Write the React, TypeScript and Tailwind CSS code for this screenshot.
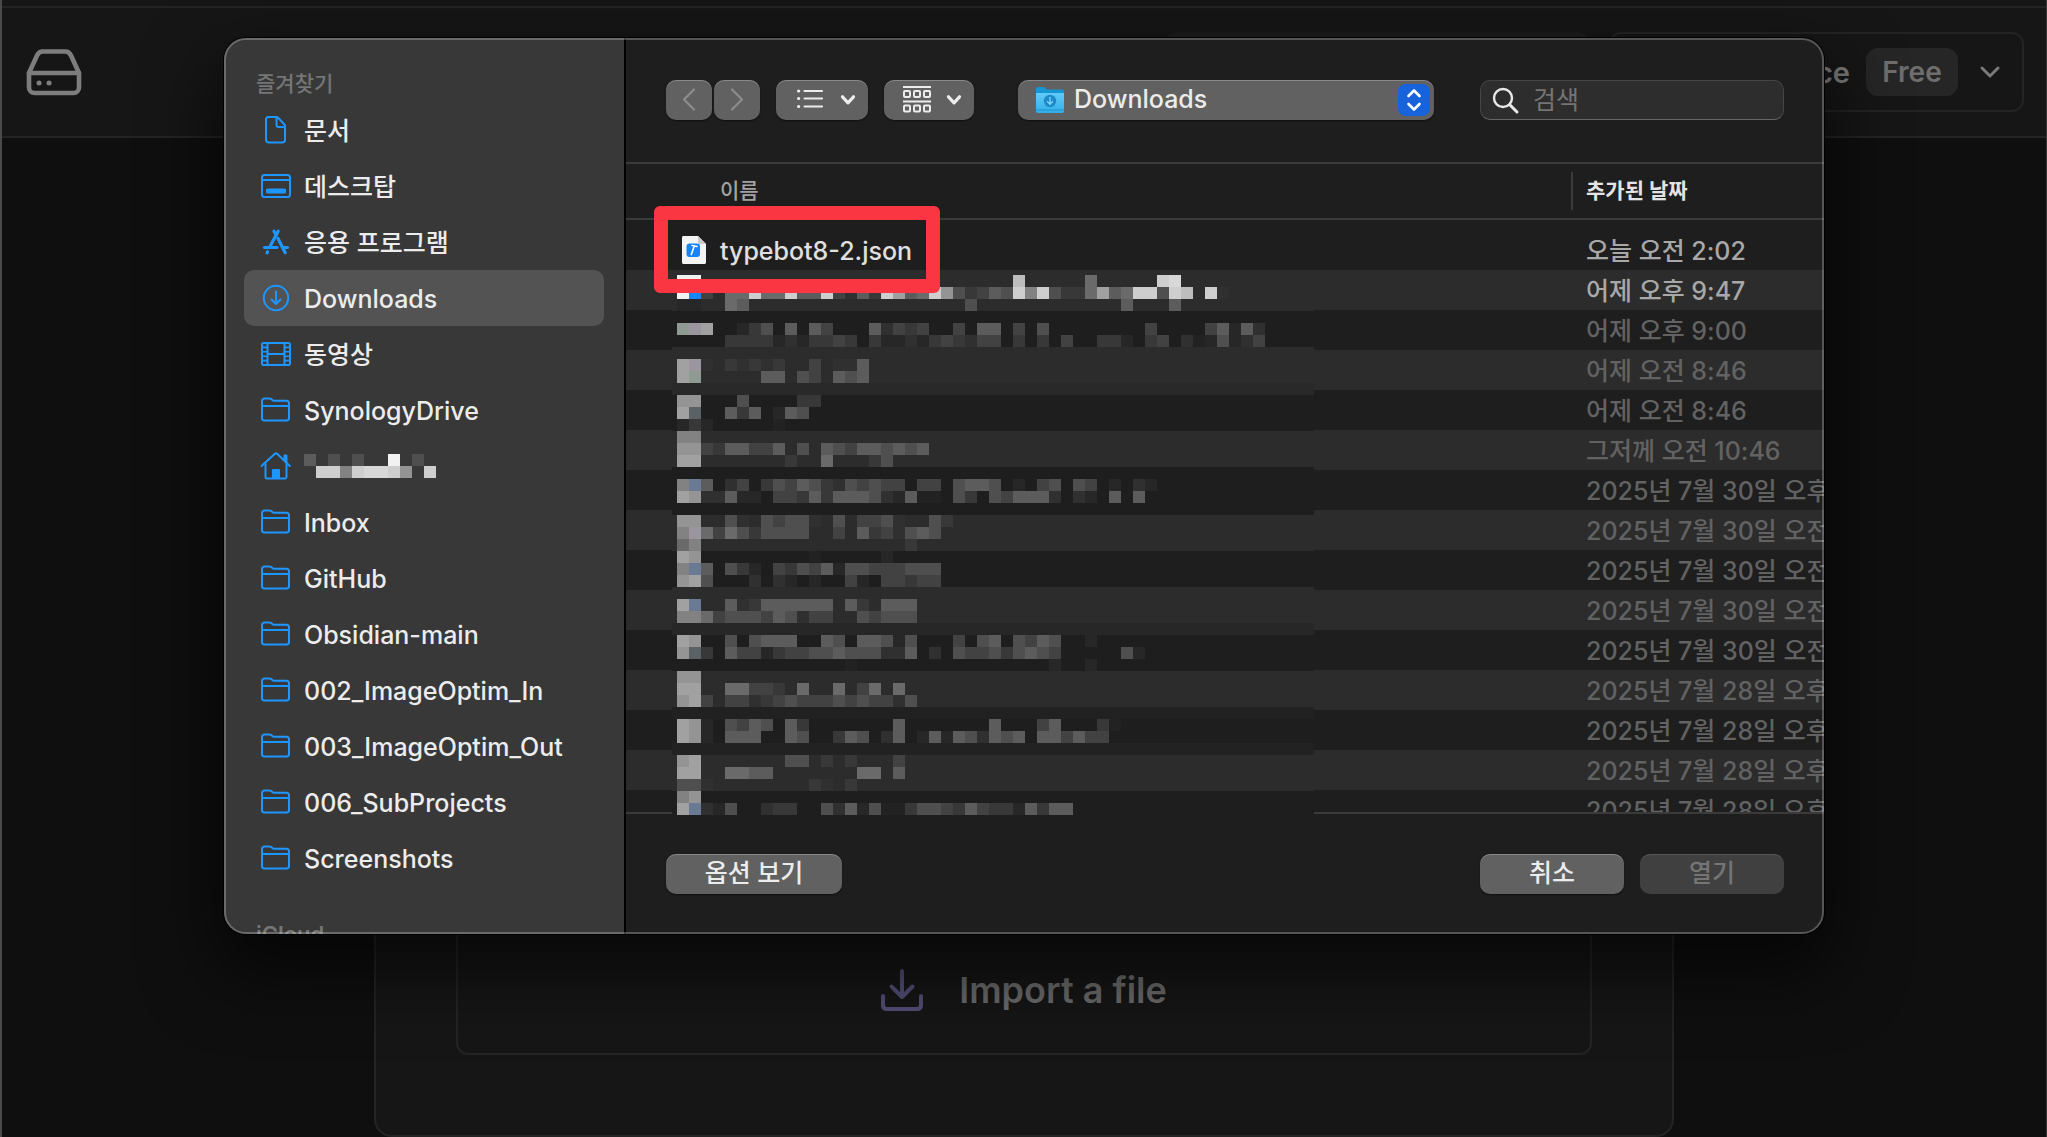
import React from "react";

const FONT = "font-[Inter,'Noto_Sans_CJK_KR',sans-serif]";

type IconName = "doc" | "desktop" | "apps" | "download" | "film" | "folder" | "home";

function SidebarIcon({ name }: { name: IconName }) {
  return (
    <svg
      aria-hidden="true"
      viewBox="0 0 32 32"
      className="h-8 w-8 shrink-0"
      fill="none"
      stroke="#1e96ff"
      strokeWidth="2"
      strokeLinejoin="round"
      strokeLinecap="round"
    >
      {name === "doc" && (
        <>
          <path d="M8.5 3h7.700c.8 0 1.300.2 1.900.8l6.100 6.400c.6.6.8 1.100.8 1.900V26a2.500 2.500 0 0 1-2.500 2.500H8.500A2.500 2.500 0 0 1 6 26V5.500A2.500 2.500 0 0 1 8.500 3Z" />
          <path d="M16.500 3.500v7.500c0 1.200.8 2 2 2h6" />
        </>
      )}
      {name === "desktop" && (
        <>
          <rect x="2" y="5" width="28" height="22" rx="2.500" />
          <path d="M2.500 10h27" />
          <rect x="7" y="19.500" width="18" height="3" rx="0.500" fill="#1e96ff" />
        </>
      )}
      {name === "apps" && (
        <g strokeWidth="3.200">
          <path d="M14 5.200 16.200 9" />
          <path d="M18.200 5.200 10.500 19.500" />
          <path d="M4.500 21.500h12.500" />
          <path d="M24.500 21.500h3" />
          <path d="M7.600 25.800 7 26.900" />
          <path d="M18 12.500l7.200 14.200" />
        </g>
      )}
      {name === "download" && (
        <>
          <circle cx="16" cy="16" r="12.200" />
          <path d="M16 9.500v12.500M11.500 17.500 16 22l4.500-4.500" />
        </>
      )}
      {name === "film" && (
        <>
          <rect x="2" y="5" width="28" height="22" rx="1.500" />
          <path d="M7.500 5v22M24.500 5v22M7.500 16h17" />
          <path
            strokeWidth="1.600"
            d="M2 9.400h5.500M2 13.800h5.500M2 18.200h5.500M2 22.600h5.500M24.500 9.400H30M24.500 13.800H30M24.500 18.200H30M24.500 22.600H30"
          />
        </>
      )}
      {name === "folder" && (
        <>
          <path d="M2 8V7a2.500 2.500 0 0 1 2.500-2.500h4.800c.9 0 1.500.2 2.200.8l.8.7c.6.5 1.100.7 2 .7h12.200A2.500 2.500 0 0 1 29 9.200V24a2.500 2.500 0 0 1-2.500 2.500h-22A2.500 2.500 0 0 1 2 24Z" />
          <path d="M2 12h27" />
        </>
      )}
      {name === "home" && (
        <>
          <path d="M1.500 16 14.600 4c.9-.8 1.900-.8 2.800 0L29.800 16" />
          <path d="M5.500 14v13a1.500 1.500 0 0 0 1.500 1.500h18a1.500 1.500 0 0 0 1.500-1.500V14" />
          <path d="M24.500 10.500V5.500h2v7" />
          <path d="M13 28v-8h6v8Z" fill="#1e96ff" />
        </>
      )}
    </svg>
  );
}

/* Cells of a redacted area: "column:levels" runs, one level letter per cell. */
const LEVELS: Record<string, string> = {
  "0": "#222222",
  "1": "#272727",
  "2": "#303030",
  "3": "#383838",
  "4": "#424242",
  "5": "#4f4f4f",
  "6": "#5c5c5c",
  "7": "#6a6a6a",
  "8": "#828282",
  "9": "#949494",
  A: "#a1a1a1",
  B: "#bdbdbd",
  C: "#cecece",
  D: "#d8d8d8",
  W: "#f2f2f2",
  S: "#1a84fb",
  s: "#6a7a95",
  g: "#8f9a92",
  p: "#9a959f",
  k: "#5a6266",
};

function Mosaic({ rows }: { rows: string[] }) {
  return (
    <>
      {rows.flatMap((row, y) =>
        row
          .split(" ")
          .filter(Boolean)
          .flatMap((run) => {
            const [start, cells] = run.split(":");
            return cells
              .split("")
              .map((c, i) => (
                <rect
                  key={`${y}-${start}-${i}`}
                  x={(Number(start) + i) * 12}
                  y={y * 12}
                  width="12"
                  height="12"
                  fill={LEVELS[c]}
                />
              ));
          }),
      )}
    </>
  );
}

const USER_CELLS = ["0:6 2:5 4:5 7:W 9:5", "1:CC8CDDC9 10:C"];

const LIST_CELLS = [
  "0:WW 28:B 34:7 40:CD",
  "0:WS4 4:77C77C66C42 15:63CA67C9534 26:65C8C5337A67CC5CB 44:C2",
  "0:11 4:76 24:5 37:6 41:6",
  "",
  "0:gpA 5:135 9:6 11:64 16:62434 23:4 25:66 28:4 30:5 39:4 44:46162",
  "4:333312133 13:43 16:311213432 25:44 28:3 30:3 32:4 35:331 39:34 42:2015124",
  "",
  "0:Ap2 4:32323 11:4 13:226",
  "0:Ag 7:66 10:54 13:656",
  "",
  "0:99 5:5 10:33",
  "0:Ak 4:636 8:165",
  "0:131 8:0",
  "0:88",
  "0:99436644 8:6 10:5 12:654665656",
  "0:AA 9:3 12:7 16:35",
  "",
  "0:8s6 4:24 7:354653254544 20:44 23:5665 28:1 30:45 33:54 36:1 38:21",
  "0:A922611 8:44363666 16:521600 23:53 26:546662 33:21 36:6 38:6",
  "",
  "0:99 4:52 7:545 10:52 13:5 15:4452 21:53",
  "0:8p7475355 9:55 13:4 15:6342565",
  "0:78 19:3",
  "0:A9 11:0 17:1",
  "0:8s6 4:531 8:43546155444555",
  "0:9A5 6:2 8:21 11:1 14:41 17:44344",
  "",
  "0:As 4:62366666 12:6 14:63 17:666",
  "0:887455546524 12:4 15:54555",
  "",
  "0:A9 4:5 6:5666 12:65 15:66515 23:4 25:56 28:5465 34:1",
  "0:9k3 4:64413445565552 18:26 21:2 23:54453565 31:4 37:51",
  "14:0 31:1 34:1",
  "0:99",
  "0:AA 4:77443 10:7 13:7 15:47 18:7",
  "0:9A4 4:4423454445454425",
  "",
  "0:A91 4:5465 9:63 18:6 26:6 30:46 35:30",
  "0:A91 4:666 9:65 13:365 17:26 20:16165 25:2656 30:664644",
  "",
  "0:9A 9:55 12:3 14:3 18:4",
  "0:AA 4:7766 15:77 18:6",
  "0:552 11:32 14:3",
  "0:89",
  "0:As215 7:233 12:526 15:15003554364331636 32:6",
];

/* Background bands behind the redacted names: [top, height, colour]. */
const BANDS: [number, number, string][] = [
  [0, 36, "#2c2c2c"],
  [36, 36, "#1e1e1e"],
  [72, 36, "#2c2c2c"],
  [108, 12, "#292929"],
  [120, 36, "#1e1e1e"],
  [156, 36, "#2c2c2c"],
  [192, 48, "#1e1e1e"],
  [240, 36, "#2c2c2c"],
  [276, 36, "#1e1e1e"],
  [312, 36, "#2c2c2c"],
  [348, 12, "#272727"],
  [360, 36, "#1e1e1e"],
  [396, 36, "#2c2c2c"],
  [432, 12, "#212121"],
  [444, 24, "#1e1e1e"],
  [468, 12, "#222222"],
  [480, 36, "#2c2c2c"],
  [516, 24, "#1e1e1e"],
];

const PLACES: { icon: IconName; label: string }[] = [
  { icon: "doc", label: "문서" },
  { icon: "desktop", label: "데스크탑" },
  { icon: "apps", label: "응용 프로그램" },
  { icon: "download", label: "Downloads" },
  { icon: "film", label: "동영상" },
  { icon: "folder", label: "SynologyDrive" },
  { icon: "home", label: "" },
  { icon: "folder", label: "Inbox" },
  { icon: "folder", label: "GitHub" },
  { icon: "folder", label: "Obsidian-main" },
  { icon: "folder", label: "002_ImageOptim_In" },
  { icon: "folder", label: "003_ImageOptim_Out" },
  { icon: "folder", label: "006_SubProjects" },
  { icon: "folder", label: "Screenshots" },
];

const FILES: { name: string; added: string; enabled: boolean }[] = [
  { name: "typebot8-2.json", added: "오늘 오전 2:02", enabled: true },
  { name: "", added: "어제 오후 9:47", enabled: true },
  { name: "", added: "어제 오후 9:00", enabled: false },
  { name: "", added: "어제 오전 8:46", enabled: false },
  { name: "", added: "어제 오전 8:46", enabled: false },
  { name: "", added: "그저께 오전 10:46", enabled: false },
  { name: "", added: "2025년 7월 30일 오후", enabled: false },
  { name: "", added: "2025년 7월 30일 오전", enabled: false },
  { name: "", added: "2025년 7월 30일 오전", enabled: false },
  { name: "", added: "2025년 7월 30일 오전", enabled: false },
  { name: "", added: "2025년 7월 30일 오전", enabled: false },
  { name: "", added: "2025년 7월 28일 오후", enabled: false },
  { name: "", added: "2025년 7월 28일 오후", enabled: false },
  { name: "", added: "2025년 7월 28일 오후", enabled: false },
  { name: "", added: "2025년 7월 28일 오후", enabled: false },
];

function Sidebar() {
  return (
    <nav aria-label="즐겨찾기" className="w-[402px] shrink-0 border-r-2 border-black bg-[#383838] pt-[26px]">
      <h2 className="px-8 pt-[2px] text-[21px] leading-9 font-medium text-[#757575]">즐겨찾기</h2>
      <ul>
        {PLACES.map((place, i) => (
          <li key={i} className="px-5">
            <button
              type="button"
              aria-label={place.label || "홈"}
              className={
                place.label === "Downloads"
                  ? "flex h-14 w-full items-center gap-3 rounded-[10px] bg-[#535353] px-4 text-left"
                  : "flex h-14 w-full items-center gap-3 px-4 text-left"
              }
            >
              <SidebarIcon name={place.icon} />
              {place.label ? (
                <span className="pt-[2px] text-[25px] leading-8 font-medium text-[#ececec]">{place.label}</span>
              ) : (
                <svg aria-hidden="true" viewBox="0 0 132 24" className="h-6 w-[132px]" shapeRendering="crispEdges">
                  <Mosaic rows={USER_CELLS} />
                </svg>
              )}
            </button>
          </li>
        ))}
      </ul>
      <h2 className="mt-[30px] px-8 text-[22px] leading-9 font-semibold text-[#757575]">iCloud</h2>
    </nav>
  );
}

const RAISED =
  "h-10 rounded-[10px] bg-[#616161] shadow-[inset_0_1px_0_rgba(255,255,255,0.25),0_1px_2px_rgba(0,0,0,0.5)]";

function SmallChevron() {
  return (
    <svg aria-hidden="true" viewBox="0 0 16 12" className="h-3 w-4" fill="none" stroke="#ececec" strokeWidth="3.200" strokeLinecap="round" strokeLinejoin="round">
      <path d="M2.500 2.800 8 8.800l5.500-6" />
    </svg>
  );
}

function Toolbar() {
  return (
    <div className="flex items-start border-b-2 border-[#3a3a3a] px-10 py-[42px]">
      <div className="flex gap-[2px]">
        <button type="button" aria-label="뒤로" className={`${RAISED} flex w-[46px] items-center justify-center`}>
          <svg aria-hidden="true" viewBox="0 0 14 24" className="h-6 w-[14px]" fill="none" stroke="#8c8c8c" strokeWidth="2.200" strokeLinecap="round" strokeLinejoin="round">
            <path d="M12 1.500 2 11.500l10 10" />
          </svg>
        </button>
        <button type="button" aria-label="앞으로" className={`${RAISED} flex w-[46px] items-center justify-center`}>
          <svg aria-hidden="true" viewBox="0 0 14 24" className="h-6 w-[14px]" fill="none" stroke="#8c8c8c" strokeWidth="2.200" strokeLinecap="round" strokeLinejoin="round">
            <path d="M2 1.500l10 10-10 10" />
          </svg>
        </button>
      </div>
      <button type="button" aria-label="목록 보기" className={`${RAISED} ml-4 flex w-[92px] items-center justify-between pr-3 pl-5`}>
        <svg aria-hidden="true" viewBox="0 0 28 24" className="h-6 w-7" fill="none" stroke="#ececec" strokeWidth="2.200" strokeLinecap="round">
          <path d="M8.500 3H26M8.500 10.500H26M8.500 18.500H26" />
          <path strokeWidth="3.200" d="M2.600 3h.1M2.600 10.500h.1M2.600 18.500h.1" />
        </svg>
        <SmallChevron />
      </button>
      <button type="button" aria-label="그룹 보기" className={`${RAISED} ml-4 flex w-[90px] items-center justify-between pr-3 pl-[18px]`}>
        <svg aria-hidden="true" viewBox="0 0 30 28" className="h-7 w-[30px]" fill="none" stroke="#ececec" strokeWidth="2">
          <path d="M1 1h28M1 15.500h28" />
          <rect x="2" y="5" width="6" height="6" rx="1" />
          <rect x="12" y="5" width="6" height="6" rx="1" />
          <rect x="22" y="5" width="6" height="6" rx="1" />
          <rect x="2" y="19.500" width="6" height="6" rx="1" />
          <rect x="12" y="19.500" width="6" height="6" rx="1" />
          <rect x="22" y="19.500" width="6" height="6" rx="1" />
        </svg>
        <SmallChevron />
      </button>
      <div className="relative ml-11 min-w-0 flex-1">
        <select
          aria-label="위치"
          className={`${RAISED} w-full appearance-none pr-12 pb-[3px] pl-14 text-[25px] leading-8 font-medium text-[#ececec]`}
        >
          <option>Downloads</option>
        </select>
        <svg aria-hidden="true" viewBox="0 0 30 28" className="pointer-events-none absolute top-[6px] left-[17px] h-7 w-[30px]">
          <defs>
            <linearGradient id="folderFront" x1="0" y1="0" x2="0" y2="1">
              <stop offset="0" stopColor="#62cbf8" />
              <stop offset="1" stopColor="#31aeea" />
            </linearGradient>
          </defs>
          <path d="M1 3c0-1.200.8-2 2-2h6l3 2.500h15c1.200 0 2 .8 2 2V10H1Z" fill="#1796d6" />
          <path d="M1 7h28v18c0 1.200-.8 2-2 2H3c-1.200 0-2-.8-2-2Z" fill="url(#folderFront)" />
          <path d="M1 24h28" stroke="#2291cc" strokeWidth="1" />
          <circle cx="15" cy="15" r="6.200" fill="#1e8bc8" />
          <path d="M15 11.500v6.500M12.500 15.800 15 18.300l2.500-2.500" fill="none" stroke="#7fd6fb" strokeWidth="1.300" strokeLinecap="round" />
        </svg>
        <span className="pointer-events-none absolute top-1 right-1 flex h-8 w-8 items-center justify-center rounded-[8px] bg-[#1763dc]">
          <svg aria-hidden="true" viewBox="0 0 16 24" className="h-6 w-4" fill="none" stroke="#ffffff" strokeWidth="2.600" strokeLinecap="round" strokeLinejoin="round">
            <path d="M2.500 8 8 2.500 13.500 8M2.500 16 8 21.500 13.500 16" />
          </svg>
        </span>
      </div>
      <div className="relative ml-[46px] w-[304px]">
        <input
          type="search"
          aria-label="검색"
          placeholder="검색"
          className="h-10 w-full rounded-[10px] border border-[#454545] border-b-[#666666] bg-[#2d2d2d] pl-[52px] text-[25px] leading-8 text-[#ececec] placeholder:text-[#757575]"
        />
        <svg aria-hidden="true" viewBox="0 0 28 28" className="pointer-events-none absolute top-[7px] left-3 h-7 w-7" fill="none" stroke="#e8e8e8" strokeWidth="2.400" strokeLinecap="round">
          <circle cx="11" cy="11" r="9" />
          <path strokeWidth="3" d="M18 18l7 7" />
        </svg>
      </div>
    </div>
  );
}

function JsonFileIcon() {
  return (
    <svg aria-hidden="true" viewBox="0 0 24 28" className="h-7 w-6 shrink-0">
      <path d="M1.500 0H16l8 8v18.500c0 .8-.7 1.500-1.500 1.500h-21C.7 28 0 27.300 0 26.500v-25C0 .7.700 0 1.500 0Z" fill="#f4f4f4" />
      <path d="M16 0l8 8h-6.500C16.700 8 16 7.300 16 6.500Z" fill="#c9c9c9" />
      <rect x="4.500" y="7.500" width="13.500" height="13.500" rx="3" fill="#1583fb" />
      <path d="M9.300 18.500 12.300 10M10 9.500l5 1" stroke="#ffffff" strokeWidth="1.600" strokeLinecap="round" />
    </svg>
  );
}

function FileList() {
  return (
    <div className="relative border-b-2 border-[#3a3a3a]">
      <div className="max-h-[648px] overflow-hidden">
        <table className="w-full table-fixed border-separate border-spacing-0">
          <colgroup>
            <col />
            <col className="w-[253px]" />
          </colgroup>
          <thead>
            <tr className="h-14">
              <th scope="col" className="border-b-2 border-[#3a3a3a] p-0 pl-[94px] text-left text-[21px] leading-7 font-medium text-[#a2a2a2]">
                이름
              </th>
              <th scope="col" className="border-b-2 border-[#3a3a3a] p-0 text-left text-[21px] leading-7 font-bold text-[#e4e4e4]">
                <div className="flex h-[38px] items-center border-l-2 border-[#3a3a3a] pl-[13px]">추가된 날짜</div>
              </th>
            </tr>
          </thead>
          <tbody>
            <tr aria-hidden="true" className="h-[10px]">
              <td colSpan={2} className="p-0" />
            </tr>
            {FILES.map((file, i) => (
              <tr key={i} className="h-10 odd:bg-[#2c2c2c]">
                <td className="p-0 pl-[56px]">
                  {file.name && (
                    <span className="flex items-center gap-[14px] text-[25px] leading-8 font-medium text-[#e0e0e0]">
                      <JsonFileIcon />
                      <span className="pt-[2px]">{file.name}</span>
                    </span>
                  )}
                </td>
                <td
                  className={
                    file.enabled
                      ? "overflow-hidden p-0 pt-[2px] pl-[15px] text-[25px] leading-8 font-medium whitespace-nowrap text-[#a8a8a8]"
                      : "overflow-hidden p-0 pt-[2px] pl-[15px] text-[25px] leading-8 font-medium whitespace-nowrap text-[#626262]"
                  }
                >
                  {file.added}
                </td>
              </tr>
            ))}
          </tbody>
        </table>
      </div>
      <svg aria-hidden="true" viewBox="-5 0 642 540" className="absolute top-[111px] left-[46px] h-[540px] w-[642px]" shapeRendering="crispEdges">
        {BANDS.map(([y, h, fill]) => (
          <rect key={y} x="-5" y={y} width="642" height={h} fill={fill} />
        ))}
        <Mosaic rows={LIST_CELLS} />
      </svg>
      <div aria-hidden="true" className="absolute top-[42px] left-7 h-[87px] w-[286px] rounded-[6px] border-[14px] border-[#fa3642]" />
    </div>
  );
}

function OpenDialog() {
  return (
    <div className="absolute inset-x-0 top-[38px] mx-auto max-w-[1600px] rounded-[22px] shadow-[0_0_0_1px_#000,0_32px_70px_10px_rgba(0,0,0,0.6)]">
      <div role="dialog" aria-label="파일 열기" className="flex max-h-[896px] overflow-hidden rounded-[22px] bg-[#1e1e1e]">
        <Sidebar />
        <div className="min-w-0 flex-1">
          <Toolbar />
          <FileList />
          <div className="flex items-center px-10 py-10">
            <button type="button" className={`${RAISED} w-[176px] pb-[2px] text-[25px] leading-8 font-medium text-[#ececec]`}>
              옵션 보기
            </button>
            <button type="button" className={`${RAISED} ml-auto w-[144px] pb-[2px] text-[25px] leading-8 font-medium text-[#ececec]`}>
              취소
            </button>
            <button
              type="button"
              disabled
              className="ml-4 h-10 w-[144px] rounded-[10px] bg-[#404040] pb-[2px] text-[25px] leading-8 font-medium text-[#757575] shadow-[inset_0_1px_0_rgba(255,255,255,0.12)]"
            >
              열기
            </button>
          </div>
        </div>
      </div>
      <div aria-hidden="true" className="pointer-events-none absolute inset-0 rounded-[22px] border-2 border-white/25" />
    </div>
  );
}

export default function App() {
  return (
    <div className={`relative flex min-h-screen flex-col overflow-hidden border-r border-l-2 border-r-[#3a3a3a] border-l-[#4a4a4a] bg-[#0f0f0f] ${FONT}`}>
      <div className="h-2 border-b-2 border-[#242424] bg-[#161616]" />
      <header className="flex h-[130px] items-center gap-5 border-b-2 border-[#242424] bg-[#161616] pr-[22px] pl-6">
        <a href="#workspace" aria-label="Workspace" className="mr-auto">
          <svg aria-hidden="true" viewBox="0 0 56 48" className="h-12 w-14" fill="none" stroke="#7d7d7d" strokeWidth="4.600" strokeLinejoin="round" strokeLinecap="round">
            <path d="M3 25 11 7.500C12.300 4.600 13.500 3.500 16.500 3.500h23c3 0 4.200 1.100 5.500 4L53 25v14.500a5.500 5.500 0 0 1-5.500 5.500h-39A5.500 5.500 0 0 1 3 39.500Z" />
            <path d="M3 25h50" />
            <path strokeWidth="5" d="M13 35h.1M23 35h.1" />
          </svg>
        </a>
        <button type="button" aria-label="Settings" className="h-20 w-[424px] rounded-[12px] bg-[#1d1d1d]" />
        <button type="button" className="flex h-20 w-[415px] items-center justify-end rounded-[12px] border-2 border-[#242424] pr-5 text-[29px] leading-9 font-semibold text-[#7a7a7a]">
          <span className="pt-[2px]">workspace</span>
          <span className="ml-4 flex h-12 w-[92px] items-center justify-center rounded-[12px] bg-[#262626] text-[28px] text-[#6e6e6e]">Free</span>
          <svg aria-hidden="true" viewBox="0 0 24 24" className="ml-5 h-6 w-6" fill="none" stroke="#7a7a7a" strokeWidth="3" strokeLinecap="round" strokeLinejoin="round">
            <path d="M4 8l8 8 8-8" />
          </svg>
        </button>
      </header>
      <main className="flex flex-1 flex-col px-8">
        <section className="mx-auto flex w-full max-w-[1300px] flex-1 flex-col justify-end rounded-b-[18px] border-2 border-[#242424] bg-[#161616] px-20 pb-20">
          <button type="button" className="flex h-40 w-full items-center justify-center gap-9 rounded-[12px] border-2 border-[#242424] pt-[30px] text-[36px] leading-10 font-semibold text-[#6c6c6c]">
            <svg aria-hidden="true" viewBox="0 0 42 42" className="h-[42px] w-[42px]" fill="none" stroke="#544f78" strokeWidth="4" strokeLinecap="round" strokeLinejoin="round">
              <path d="M21 2v26M10.500 17.500 21 28l10.500-10.500" />
              <path d="M2 27v9c0 2.500 1.500 4 4 4h30c2.500 0 4-1.500 4-4v-9" />
            </svg>
            Import a file
          </button>
        </section>
      </main>
      <OpenDialog />
    </div>
  );
}
